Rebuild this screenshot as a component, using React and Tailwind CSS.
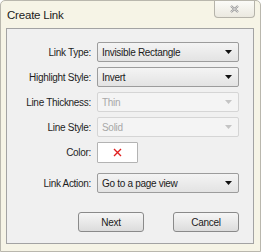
import React from 'react';

const Arrow = ({ disabled }) => (
  <svg width="7" height="4" viewBox="0 0 7 4" className="shrink-0">
    <path d="M0 0h7L3.5 4z" fill={disabled ? '#c4c4c4' : '#111'} />
  </svg>
);

const Select = ({ value, disabled }) => (
  <div
    className={
      'flex items-center justify-between w-[142px] h-[20px] pl-[4px] pr-[6px] rounded-[2px] border ' +
      (disabled
        ? 'border-[#d5d5d5] bg-[#f4f4f4] text-[#a8a8a8]'
        : 'border-[#9c9c9c] bg-gradient-to-b from-[#f4f4f4] to-[#e3e3e3] text-[#1a1a1a]')
    }
  >
    <span>{value}</span>
    <Arrow disabled={disabled} />
  </div>
);

const Row = ({ label, className = '', children }) => (
  <div className={'flex items-center ' + className}>
    <div className="w-[85px] pr-[1px] text-right text-[#1e1e1e]">{label}</div>
    <div className="ml-[5px]">{children}</div>
  </div>
);

const Button = ({ children }) => (
  <div className="flex items-center justify-center w-[66px] h-[20px] rounded-[3px] border border-[#8a8a8a] bg-gradient-to-b from-[#f6f6f6] to-[#dcdcdc] text-[#1a1a1a]">
    {children}
  </div>
);

const CreateLink = () => (
  <div
    className="w-[261px] h-[252px] bg-[#f6f4e6] border border-[#b9b7ad] rounded-t-[5px] flex flex-col text-[10px] tracking-[-0.3px]"
    style={{ fontFamily: '"Liberation Sans", Arial, sans-serif' }}
  >
    {/* title bar */}
    <div className="flex items-start h-[27px]">
      <div className="pl-[6px] pt-[6px] text-[11.5px] tracking-[-0.2px] text-[#1a1a1a]">Create Link</div>
      <div className="ml-auto mr-[5px] w-[41px] h-[17px] flex items-center justify-center rounded-b-[4px] border border-t-0 border-[#b5b3aa] bg-gradient-to-b from-[#fbfbf8] to-[#ebe9e0]">
        <svg width="9" height="8" viewBox="0 0 9 8">
          <path d="M1 1l7 6M8 1L1 7" stroke="#8e8e8e" strokeWidth="2.2" />
          <path d="M1 1l7 6M8 1L1 7" stroke="#f2f2f2" strokeWidth="0.8" />
        </svg>
      </div>
    </div>

    {/* panel */}
    <div className="ml-[5px] mr-[6px] h-[216px] bg-[#f0f0f0] border border-[#a3a3a3] flex flex-col pt-[13px]">
      <Row label="Link Type:">
        <Select value="Invisible Rectangle" />
      </Row>
      <Row label="Highlight Style:" className="mt-[5px]">
        <Select value="Invert" />
      </Row>
      <Row label="Line Thickness:" className="mt-[5px]">
        <Select value="Thin" disabled />
      </Row>
      <Row label="Line Style:" className="mt-[5px]">
        <Select value="Solid" disabled />
      </Row>
      <Row label="Color:" className="mt-[5px]">
        <div className="flex items-center justify-center w-[41px] h-[21px] border border-[#b3b3b3] bg-white rounded-[1px]">
          <svg width="9" height="9" viewBox="0 0 9 9">
            <path d="M1 1l7 7M8 1L1 8" stroke="#e02020" strokeWidth="1.4" />
          </svg>
        </div>
      </Row>
      <Row label="Link Action:" className="mt-[10px]">
        <Select value="Go to a page view" />
      </Row>
      <div className="flex mt-[19px] pl-[71px] gap-[29px]">
        <Button>Next</Button>
        <Button>Cancel</Button>
      </div>
    </div>
  </div>
);

export default function App() {
  return <CreateLink />;
}
